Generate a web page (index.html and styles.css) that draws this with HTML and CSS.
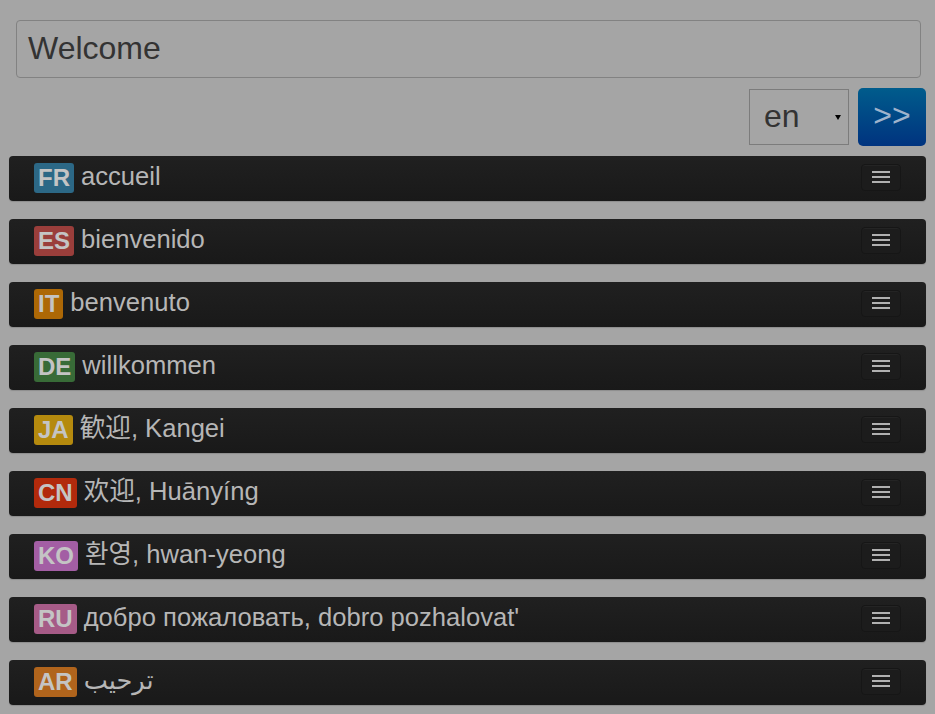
FILE: index.html
```html
<!DOCTYPE html>
<html>
<head>
<meta charset="utf-8">
<link rel="stylesheet" href="styles.css">
</head>
<body>
<div class="page">
  <div class="form">
    <div class="phrase">Welcome</div>
    <div class="controls">
      <div class="select"><span>en</span><span class="caret"></span></div>
      <div class="go">&gt;&gt;</div>
    </div>
  </div>
  <ul class="list">
    <li class="row"><span class="badge fr">FR</span> <span class="text">accueil</span><span class="menu"><i></i><i></i><i></i></span></li>
    <li class="row"><span class="badge es">ES</span> <span class="text">bienvenido</span><span class="menu"><i></i><i></i><i></i></span></li>
    <li class="row"><span class="badge it">IT</span> <span class="text">benvenuto</span><span class="menu"><i></i><i></i><i></i></span></li>
    <li class="row"><span class="badge de">DE</span> <span class="text">willkommen</span><span class="menu"><i></i><i></i><i></i></span></li>
    <li class="row"><span class="badge ja">JA</span> <span class="text jp" lang="ja">歓迎, Kangei</span><span class="menu"><i></i><i></i><i></i></span></li>
    <li class="row"><span class="badge cn">CN</span> <span class="text sc" lang="zh-CN">欢迎, Huānyíng</span><span class="menu"><i></i><i></i><i></i></span></li>
    <li class="row"><span class="badge ko">KO</span> <span class="text kr" lang="ko">환영, hwan-yeong</span><span class="menu"><i></i><i></i><i></i></span></li>
    <li class="row"><span class="badge ru">RU</span> <span class="text">добро пожаловать, dobro pozhalovat'</span><span class="menu"><i></i><i></i><i></i></span></li>
    <li class="row"><span class="badge ar">AR</span> <span class="text arab" lang="ar">ترحيب</span><span class="menu"><i></i><i></i><i></i></span></li>
  </ul>
</div>
</body>
</html>
```
FILE: styles.css
```css
html, body {
  margin: 0;
  padding: 0;
  background: #a5a5a5;
  font-family: "Liberation Sans", "DejaVu Sans", sans-serif;
}
.page {
  padding: 20px 9px 0 9px;
}
.form {
  padding: 0 5px 0 7px;
}
.phrase {
  box-sizing: border-box;
  height: 58px;
  border: 1px solid #828282;
  border-radius: 4px;
  padding: 0 11px;
  font-size: 32px;
  line-height: 54px;
  color: #333333;
}
.controls {
  display: flex;
  justify-content: flex-end;
  align-items: center;
  gap: 9px;
  margin-top: 10px;
  margin-right: -5px;
}
.select {
  width: 100px;
  height: 56px;
  box-sizing: border-box;
  border: 1px solid #7c7c7c;
  display: flex;
  align-items: center;
  justify-content: space-between;
  padding: 0 7px 2px 14px;
  font-size: 32px;
  color: #333333;
}
.caret {
  width: 0;
  height: 0;
  border-left: 3px solid transparent;
  border-right: 3px solid transparent;
  border-top: 5px solid #000;
  margin-top: 2px;
}
.go {
  width: 68px;
  height: 58px;
  border-radius: 5px;
  background: linear-gradient(#005c8c, #00337f);
  color: #9fb3cc;
  font-size: 32px;
  display: flex;
  align-items: center;
  justify-content: center;
  padding-bottom: 3px;
  box-sizing: border-box;
}
.list {
  list-style: none;
  margin: 10px 0 0 0;
  padding: 0;
}
.row {
  height: 45px;
  margin-bottom: 18px;
  border-radius: 4px;
  background: linear-gradient(#202020, #191919);
  display: flex;
  align-items: center;
  padding: 0 25px;
  box-shadow: 0 1px 1px rgba(0,0,0,0.15);
}
.badge {
  display: inline-block;
  height: 30px;
  line-height: 30px;
  padding: 0 4px;
  border-radius: 3px;
  font-weight: bold;
  font-size: 24px;
  color: #c4c4c4;
  margin-top: -2px;
}
.fr { background: #2c6886; }
.es { background: #9a3e3b; }
.it { background: #ad6806; }
.de { background: #386b37; }
.ja { background: #b58a0e; }
.cn { background: #b22a0c; }
.ko { background: #a35ea4; }
.ru { background: #a65b87; }
.ar { background: #b0641c; }
.text {
  margin-left: 7px;
  font-size: 25.6px;
  line-height: 30px;
  height: 30px;
  margin-top: -5px;
  color: #b6b6b6;
  flex: 1;
  white-space: nowrap;
}
.jp { font-family: "Liberation Sans", "Noto Sans CJK JP", sans-serif; }
.sc { font-family: "Liberation Sans", "Noto Sans CJK SC", sans-serif; }
.kr { font-family: "Liberation Sans", "Noto Sans CJK KR", sans-serif; }
.arab { font-family: "DejaVu Sans", sans-serif; font-size: 25.6px; }
.menu {
  width: 40px;
  height: 27px;
  box-sizing: border-box;
  border: 1px solid #161616;
  border-radius: 4px;
  background: #1c1c1c;
  box-shadow: inset 0 1px 0 rgba(255,255,255,0.04);
  display: flex;
  flex-direction: column;
  align-items: center;
  justify-content: center;
  gap: 3px;
  margin-top: -3px;
}
.menu i {
  display: block;
  width: 18px;
  height: 2px;
  background: #b0b0b0;
}
```
